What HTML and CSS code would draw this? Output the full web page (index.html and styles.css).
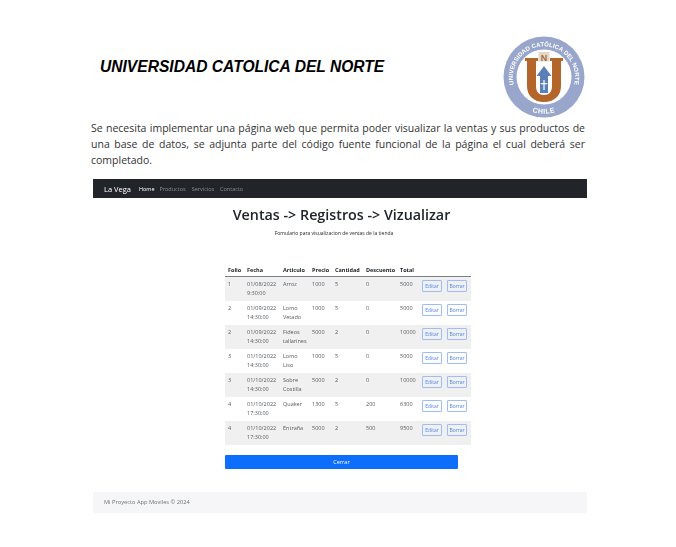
FILE: index.html
```html
<!DOCTYPE html>
<html lang="en">
<head>
    <meta charset="UTF-8">
    <title>Universidad Catolica del Norte</title>
    <link rel="stylesheet" href="styles.css">
</head>
<body>
    <div class="doc">
        <header class="doc-head">
            <h1>UNIVERSIDAD CATOLICA DEL NORTE</h1>
            <svg class="logo" viewBox="0 0 82 82" width="82" height="82">
                <circle cx="41" cy="41" r="40.5" fill="#98a6cb"/>
                <circle cx="41" cy="41" r="27.5" fill="#ffffff"/>
                <defs>
                    <path id="arcTop" d="M14 56.6 A31 31 0 1 1 68 56.6"/>
                    <path id="arcBottom" d="M15 67 A37 37 0 0 0 67 67"/>
                </defs>
                <text class="logo-text"><textPath href="#arcTop" startOffset="50%" text-anchor="middle">UNIVERSIDAD CATÓLICA DEL NORTE</textPath></text>
                <text class="logo-chile"><textPath href="#arcBottom" startOffset="50%" text-anchor="middle">CHILE</textPath></text>
                <rect x="35.5" y="16" width="11" height="9.5" fill="#e3d6c4"/>
                <text class="logo-n" x="41" y="24.5">N</text>
                <path d="M22 22h13v3h-2v25c0 6 3 9 8 9s8-3 8-9V25h-2v-3h13v3h-2v25c0 10-7 16-17 16s-17-6-17-16V25h-2z" fill="#b4652a"/>
                <path d="M41 30 48.5 40H45v17H37V40h-3.5z" fill="#5d7fb8"/>
                <path d="M40.4 44h1.2v3h2.6v1.2h-2.6V54h-1.2v-5.8h-2.6V47h2.6z" fill="#ffffff"/>
            </svg>
        </header>
        <p class="intro">Se necesita implementar una página web que permita poder visualizar la ventas y sus productos de una base de datos, se adjunta parte del código fuente funcional de la página el cual deberá ser completado.</p>

        <div class="shot">
            <nav class="navbar">
                <span class="brand">La Vega</span>
                <a class="active">Home</a>
                <a>Productos</a>
                <a>Servicios</a>
                <a>Contacto</a>
            </nav>
            <main class="content">
                <h2>Ventas -&gt; Registros -&gt; Vizualizar</h2>
                <p class="lead">Fomulario para visualizacion de ventas de la tienda</p>
                <table class="sales">
                    <colgroup>
                        <col class="c1"><col class="c2"><col class="c3"><col class="c4"><col class="c5"><col class="c6"><col class="c7"><col class="c8">
                    </colgroup>
                    <thead>
                        <tr><th>Folio</th><th>Fecha</th><th>Articulo</th><th>Precio</th><th>Cantidad</th><th>Descuento</th><th>Total</th><th></th></tr>
                    </thead>
                    <tbody>
                        <tr><td>1</td><td>01/08/2022 9:30:00</td><td>Arroz</td><td>1000</td><td>5</td><td>0</td><td>5000</td><td><span class="btn">Editar</span><span class="btn">Borrar</span></td></tr>
                        <tr><td>2</td><td>01/09/2022 14:30:00</td><td>Lomo Vetado</td><td>1000</td><td>5</td><td>0</td><td>5000</td><td><span class="btn">Editar</span><span class="btn">Borrar</span></td></tr>
                        <tr><td>2</td><td>01/09/2022 14:30:00</td><td>Fideos tallarines</td><td>5000</td><td>2</td><td>0</td><td>10000</td><td><span class="btn">Editar</span><span class="btn">Borrar</span></td></tr>
                        <tr><td>3</td><td>01/10/2022 14:30:00</td><td>Lomo Liso</td><td>1000</td><td>5</td><td>0</td><td>5000</td><td><span class="btn">Editar</span><span class="btn">Borrar</span></td></tr>
                        <tr><td>3</td><td>01/10/2022 14:30:00</td><td>Sobre Costilla</td><td>5000</td><td>2</td><td>0</td><td>10000</td><td><span class="btn">Editar</span><span class="btn">Borrar</span></td></tr>
                        <tr><td>4</td><td>01/10/2022 17:30:00</td><td>Quaker</td><td>1300</td><td>5</td><td>200</td><td>6300</td><td><span class="btn">Editar</span><span class="btn">Borrar</span></td></tr>
                        <tr><td>4</td><td>01/10/2022 17:30:00</td><td>Entraña</td><td>5000</td><td>2</td><td>500</td><td>9500</td><td><span class="btn">Editar</span><span class="btn">Borrar</span></td></tr>
                    </tbody>
                </table>
                <div class="close-btn">Cerrar</div>
            </main>
            <footer class="foot">Mi Proyecto App Moviles © 2024</footer>
        </div>
    </div>
</body>
</html>
```

FILE: styles.css
```css
body {
    margin: 0;
    background-color: #ffffff;
    font-family: "Open Sans", Arial, sans-serif;
    color: #212529;
}
.doc {
    width: 676px;
    height: 547px;
    padding: 36px 91px 0 91px;
    box-sizing: border-box;
    overflow: hidden;
}
.doc-head {
    display: flex;
    justify-content: space-between;
    align-items: flex-start;
    padding-left: 9px;
}
h1 {
    margin: 21px 0 0;
    font-family: "Liberation Sans", Arial, sans-serif;
    font-size: 15.6px;
    line-height: 20px;
    font-weight: bold;
    font-style: italic;
    color: #000000;
}
.logo {
    display: block;
    filter: blur(0.3px);
}
.logo-text {
    font-family: "Liberation Sans", Arial, sans-serif;
    font-size: 6.1px;
    font-weight: bold;
    fill: #ffffff;
}
.logo-chile {
    font-family: "Liberation Sans", Arial, sans-serif;
    font-size: 7px;
    font-weight: bold;
    letter-spacing: 0.5px;
    fill: #ffffff;
}
.logo-n {
    font-family: "Liberation Sans", Arial, sans-serif;
    font-size: 9px;
    font-weight: bold;
    text-anchor: middle;
    fill: #a5683a;
}
.intro {
    margin: 2px 0 0;
    font-size: 10.5px;
    line-height: 16px;
    text-align: justify;
    color: #333333;
}
.shot {
    margin: 11px 0 0 2px;
    width: 494px;
    filter: blur(0.3px);
}
.navbar {
    display: flex;
    align-items: center;
    height: 19px;
    padding-left: 11px;
    background-color: #212529;
    font-size: 5.5px;
    color: #8b8e91;
}
.navbar a {
    margin-right: 6px;
}
.navbar .active {
    margin-right: 5px;
    color: #ffffff;
}
.brand {
    margin-right: 8px;
    font-size: 7.5px;
    color: #ffffff;
}
.content {
    display: flex;
    flex-direction: column;
    align-items: center;
}
h2 {
    margin: 7px 0 0 3px;
    font-size: 14.3px;
    line-height: 20px;
    font-weight: 600;
}
.lead {
    margin: 3px 12px 0 0;
    font-size: 5px;
    line-height: 10px;
}
.sales {
    margin-top: 26px;
    margin-left: 16px;
    width: 246px;
    table-layout: fixed;
    border-collapse: collapse;
    font-size: 5.5px;
    line-height: 9px;
}
.c1 { width: 19px; }
.c2 { width: 36px; }
.c3 { width: 29px; }
.c4 { width: 23px; }
.c5 { width: 31px; }
.c6 { width: 34px; }
.c7 { width: 22px; }
.c8 { width: 52px; }
.sales th {
    height: 12px;
    padding: 0 3px;
    text-align: left;
    font-weight: bold;
    border-bottom: 1px solid #7b8087;
}
.sales td {
    height: 24px;
    padding: 3px 3px 0;
    box-sizing: border-box;
    vertical-align: top;
    color: #55595d;
}
.sales tbody tr:nth-child(odd) {
    background-color: #f0f0f0;
}
.sales td:last-child {
    padding: 3px 0 0 3px;
    white-space: nowrap;
}
.btn {
    display: inline-block;
    width: 20px;
    height: 12px;
    margin-right: 5px;
    line-height: 10px;
    border: 1px solid #9dbdf5;
    border-radius: 1px;
    box-sizing: border-box;
    text-align: center;
    font-size: 5px;
    color: #4f86ee;
    background-color: #ffffff;
}
.sales tbody tr:nth-child(odd) .btn {
    background-color: #f0f0f0;
}
.close-btn {
    margin-top: 10px;
    margin-left: 3px;
    width: 233px;
    height: 14px;
    line-height: 14px;
    border-radius: 1px;
    text-align: center;
    font-size: 5.5px;
    color: #ffffff;
    background-color: #0d6efd;
}
.foot {
    margin-top: 23px;
    height: 21px;
    padding-left: 11px;
    line-height: 21px;
    font-size: 5.7px;
    color: #6c757d;
    background-color: #f6f6f9;
}
```
